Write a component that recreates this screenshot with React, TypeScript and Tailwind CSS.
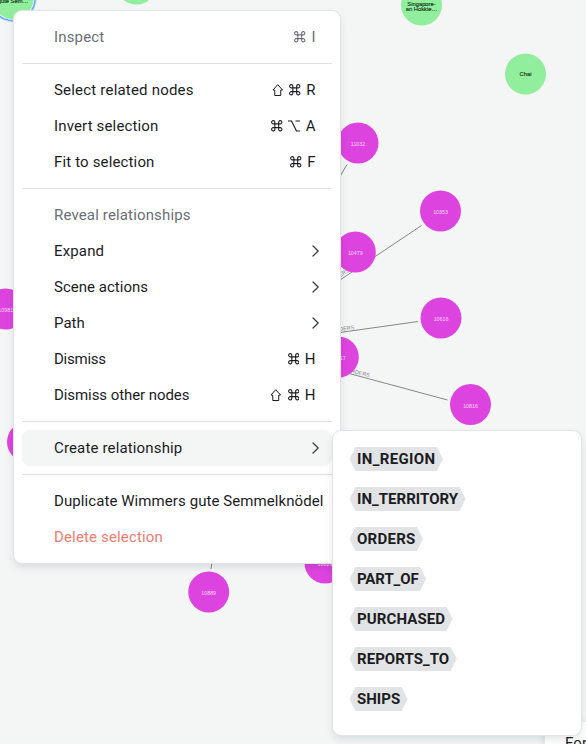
import React from "react";

type GraphNode = { x: number; y: number; color: string; lines: string[] };

const PINK = "#dd44df";
const GREEN = "#90ee9c";

const nodes: GraphNode[] = [
  { x: 136.5, y: -16, color: GREEN, lines: [] },
  { x: 421.5, y: 5, color: GREEN, lines: ["Singapore-", "an Hokkie…"] },
  { x: 525.5, y: 74, color: GREEN, lines: ["Chai"] },
  { x: 358, y: 143, color: PINK, lines: ["11032"] },
  { x: 440.5, y: 211, color: PINK, lines: ["10353"] },
  { x: 355.3, y: 252, color: PINK, lines: ["10479"] },
  { x: 441, y: 318, color: PINK, lines: ["10616"] },
  { x: 338.3, y: 357, color: PINK, lines: ["10417"] },
  { x: 470.5, y: 404.5, color: PINK, lines: ["10816"] },
  { x: 5.7, y: 309, color: PINK, lines: ["10981"] },
  { x: 27.5, y: 442, color: PINK, lines: [] },
  { x: 208.7, y: 592, color: PINK, lines: ["10889"] },
  { x: 325, y: 563, color: PINK, lines: ["10829"] },
];

function Graph() {
  return (
    <svg className="block h-[744px] w-[586px] font-['Liberation_Sans',sans-serif]" viewBox="0 0 586 744">
      <g stroke="#858787" strokeWidth="1">
        <path d="M347 164.500L340 176.500M421.500 225.500L340 280M418 321.500L340 332.500M340 371L447.500 400M212 562L211 569" />
      </g>
      <g fill="#858787" fontSize="5.500">
        <text transform="translate(330 284) rotate(-33)">ORDERS</text>
        <text transform="translate(331 332) rotate(-7)">ORDERS</text>
        <text transform="translate(346.500 371.500) rotate(14)">ORDERS</text>
      </g>
      <circle cx="13" cy="-1.500" r="24" fill="#dfe9ee" />
      <circle cx="13" cy="-1.500" r="23" fill="#62b2f8" />
      <circle cx="13" cy="-1.500" r="21.300" fill="#f4fbf8" />
      <circle cx="13" cy="-1.500" r="20.500" fill={GREEN} />
      <text x="13" y="3" textAnchor="middle" fontSize="5.800" fill="#16301a" stroke="#16301a" strokeWidth="0.150">gute Sem…</text>
      {nodes.map((n) => {
        const pink = n.color === PINK;
        return (
          <g key={`${n.x}-${n.y}`}>
            <circle cx={n.x} cy={n.y} r="20.500" fill={n.color} />
            {n.lines.map((line, i) => (
              <text
                key={line}
                x={n.x}
                y={n.y + (pink ? 3 : 2) + (n.lines.length > 1 ? i * 5 - 1.5 : 0)}
                textAnchor="middle"
                fontSize={pink ? 5.3 : 5.8}
                fill={pink ? "#fbd9fb" : "#16301a"}
                stroke={pink ? "none" : "#16301a"}
                strokeWidth="0.150"
              >
                {line}
              </text>
            ))}
          </g>
        );
      })}
    </svg>
  );
}

function Command() {
  return (
    <svg className="h-[11.5px] w-[11.5px]" viewBox="0 0 12 12" fill="none" stroke="currentColor" strokeWidth="1.150">
      <path d="M4 4H8V8H4ZM4 4H2.500A1.700 1.700 0 1 1 4 2.500ZM8 4V2.500A1.700 1.700 0 1 1 9.500 4ZM8 8H9.500A1.700 1.700 0 1 1 8 9.500ZM4 8V9.500A1.700 1.700 0 1 1 2.500 8Z" />
    </svg>
  );
}

function Shift() {
  return (
    <svg className="mr-[0.5px] h-3 w-[11.5px]" viewBox="0 0 11 12" fill="none" stroke="currentColor" strokeWidth="1">
      <path d="M5.500 .7L10.300 6H8.500V11.500H2.500V6H.7Z" />
    </svg>
  );
}

function Option() {
  return (
    <svg className="h-3 w-3" viewBox="0 0 12 12" fill="none" stroke="currentColor" strokeWidth="1.200">
      <path d="M0 1H3.500L8.500 11H12M7.500 1H12" />
    </svg>
  );
}

function Chevron() {
  return (
    <svg className="-mr-[4px] h-3 w-2" viewBox="0 0 8 12" fill="none" stroke="#3c3f44" strokeWidth="1.300">
      <path d="M1 1L6.200 6L1 11" strokeLinecap="round" strokeLinejoin="round" />
    </svg>
  );
}

type ItemProps = {
  label: string;
  tracking?: string;
  tone?: string;
  active?: boolean;
  children?: React.ReactNode;
};

function Item({ label, tracking = "tracking-[0.15px]", tone = "text-[#1b1c1f]", active, children }: ItemProps) {
  return (
    <div
      className={`flex h-9 shrink-0 items-center justify-between rounded-lg pr-2 pl-8 text-[15px] leading-5 whitespace-nowrap ${tone} ${active ? "bg-[#f4f6f6]" : ""}`}
    >
      <span className={tracking}>{label}</span>
      {children && <span className="mr-[8.5px] flex items-center gap-[5.5px]">{children}</span>}
    </div>
  );
}

function Divider() {
  return <div className="my-2 h-px bg-[#dfe1e4]" />;
}

function Tag({ label, tracking }: { label: string; tracking: string }) {
  return (
    <div className="flex h-10 items-center">
      <span
        className={`flex h-6 items-center bg-[#e2e3e5] px-[7.5px] text-[15px] font-bold [clip-path:polygon(6px_0,calc(100%-6px)_0,100%_50%,calc(100%-6px)_100%,6px_100%,0_50%)] ${tracking}`}
      >
        {label}
      </span>
    </div>
  );
}

export default function App() {
  return (
    <div className="relative h-[744px] w-[586px] overflow-hidden bg-[#f4f6f6] font-[Roboto,sans-serif] text-[#1b1c1f]">
      <Graph />
      <div className="absolute top-[722px] left-[545px] h-20 w-40 bg-white pt-[11px] pl-5 text-[15px] leading-5 tracking-[0.15px] shadow-[0_2px_8px_rgba(0,0,0,0.12)]">
        For
      </div>

      <div className="absolute top-[11px] left-[14px] h-[552px] w-[326px] rounded-lg bg-white p-2 shadow-[0_0_0_1px_#e2e3e5,0_4px_8px_rgba(12,26,37,0.12)]">
        <Item label="Inspect" tone="text-[#6a6e76]">
          <Command />
          <span>I</span>
        </Item>
        <Divider />
        <Item label="Select related nodes" tracking="tracking-[0.2px]">
          <Shift />
          <Command />
          <span>R</span>
        </Item>
        <Item label="Invert selection">
          <Command />
          <Option />
          <span>A</span>
        </Item>
        <Item label="Fit to selection">
          <Command />
          <span>F</span>
        </Item>
        <Divider />
        <Item label="Reveal relationships" tone="text-[#6a6e76]" />
        <Item label="Expand"><Chevron /></Item>
        <Item label="Scene actions" tracking="tracking-[0.02px]"><Chevron /></Item>
        <Item label="Path" tracking="tracking-[0px]"><Chevron /></Item>
        <Item label="Dismiss" tracking="tracking-[-0.25px]">
          <Command />
          <span>H</span>
        </Item>
        <Item label="Dismiss other nodes" tracking="tracking-[-0.07px]">
          <Shift />
          <Command />
          <span>H</span>
        </Item>
        <Divider />
        <Item label="Create relationship" active><Chevron /></Item>
        <Divider />
        <Item label="Duplicate Wimmers gute Semmelknödel" tracking="tracking-[0.08px]" />
        <Item label="Delete selection" tone="text-[#ed7d72]" />
      </div>

      <div className="absolute top-[431px] left-[333px] h-[304px] w-[248px] rounded-lg bg-white pt-2 pl-[16.5px] shadow-[0_0_0_1px_#e2e3e5,0_4px_8px_rgba(12,26,37,0.12)]">
        <Tag label="IN_REGION" tracking="tracking-[0.350px]" />
        <Tag label="IN_TERRITORY" tracking="tracking-[0.03px]" />
        <Tag label="ORDERS" tracking="tracking-[0.250px]" />
        <Tag label="PART_OF" tracking="tracking-[-0.1px]" />
        <Tag label="PURCHASED" tracking="tracking-[0.1px]" />
        <Tag label="REPORTS_TO" tracking="tracking-[0.05px]" />
        <Tag label="SHIPS" tracking="tracking-[0px]" />
      </div>
    </div>
  );
}
